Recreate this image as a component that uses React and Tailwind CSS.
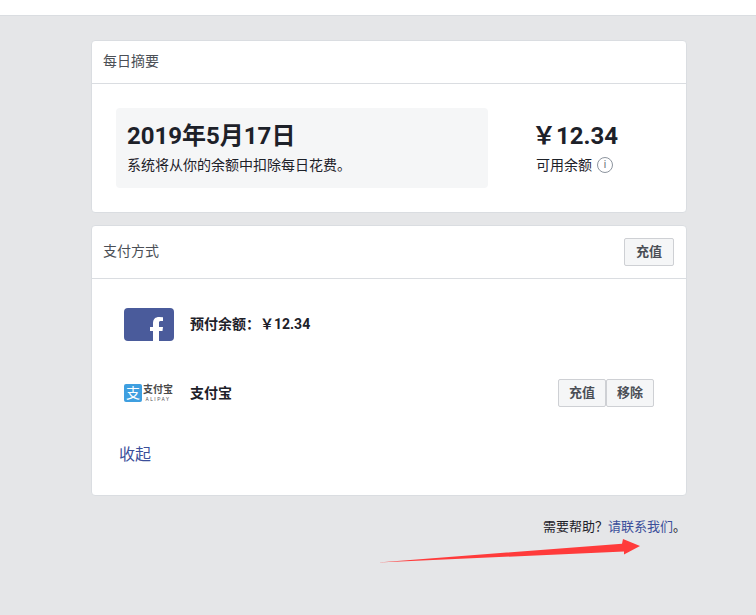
const Btn = ({ children, className = 'w-[50px]' }) => (
  <button className={`h-[28px] bg-[#f5f6f7] border border-[#ced0d4] rounded-[2px] text-[13px] font-bold text-[#4b4f56] ${className}`}>
    {children}
  </button>
)

const FacebookLogo = () => (
  <div className="w-[50px] h-[33px] rounded-[4px] bg-[#4a5b9b] overflow-hidden">
    <svg width="50" height="33" viewBox="0 0 50 33">
      <path d="M29 33V23H26V19H29V15.500C29 11 31.500 9 35 9L39 9.300V13H36.500C35 13 35 14 35 15.500V19H39L38.500 23H35V33Z" fill="#fff" />
    </svg>
  </div>
)

const AlipayLogo = () => (
  <div className="flex items-center gap-[1px] w-[50px]">
    <div className="w-[18px] h-[18px] rounded-[2px] bg-[#3f9fe0] flex items-center justify-center text-white text-[14px] leading-none">支</div>
    <div className="flex flex-col items-center">
      <span className="text-[10px] leading-[12px] font-bold text-[#4a4a4a] whitespace-nowrap">支付宝</span>
      <span className="text-[5px] leading-[6px] tracking-[1.500px] text-[#555]">ALIPAY</span>
    </div>
  </div>
)

export default function App() {
  return (
    <div className="relative min-h-[615px] bg-[#e5e6e8] font-['Roboto','Noto_Sans_CJK_SC',sans-serif] text-[#1d2129] overflow-hidden">
      {/* top bar */}
      <div className="h-[16px] bg-white border-b border-[#dadde1]"></div>

      <div className="w-[596px] ml-[91px] pt-[24px]">
        {/* summary */}
        <div className="h-[173px] bg-white border border-[#dadde1] rounded-[4px]">
          <div className="h-[43px] px-[11px] pb-[2px] flex items-center border-b border-[#dadde1] text-[14px] text-[#4b4f56]">
            每日摘要
          </div>
          <div className="flex pl-[24px] pt-[24px]">
            <div className="w-[372px] h-[80px] bg-[#f5f6f7] rounded-[4px] pl-[11px] pt-[13px]">
              <div className="text-[24px] leading-[30px] font-bold">2019年5月17日</div>
              <div className="text-[14px] leading-[18px] mt-[5px]">系统将从你的余额中扣除每日花费。</div>
            </div>
            <div className="ml-[48px] pt-[13px]">
              <div className="text-[24px] leading-[30px] font-bold -ml-[4px]">￥12.34</div>
              <div className="flex items-center gap-[5px] text-[14px] leading-[20px] mt-[4px]">
                可用余额
                <span className="w-[16px] h-[16px] rounded-full border border-[#8d949e] flex items-center justify-center text-[10px] text-[#606770]">i</span>
              </div>
            </div>
          </div>
        </div>

        {/* payment methods */}
        <div className="h-[271px] mt-[12px] bg-white border border-[#dadde1] rounded-[4px]">
          <div className="h-[53px] pl-[11px] pr-[12px] flex items-center justify-between border-b border-[#dadde1]">
            <span className="text-[14px] text-[#4b4f56] -mt-[2px]">支付方式</span>
            <Btn>充值</Btn>
          </div>

          <div className="flex items-center pl-[32px] pt-[29px] h-[62px]">
            <FacebookLogo />
            <span className="ml-[16px] text-[14px] font-bold">预付余额：￥12.34</span>
          </div>

          <div className="flex items-center pl-[32px] pr-[32px] mt-[38px] h-[28px]">
            <AlipayLogo />
            <span className="ml-[16px] text-[14px] font-bold">支付宝</span>
            <div className="ml-auto flex">
              <Btn className="w-[48px]">充值</Btn>
              <Btn className="w-[48px]">移除</Btn>
            </div>
          </div>

          <div className="pl-[27px] mt-[36px] text-[16px] leading-[24px] text-[#3b4f9b]">收起</div>
        </div>

        <div className="mt-[22px] text-right text-[13px] leading-[18px] pr-[1px]">
          需要帮助？<span className="text-[#3b4f9b]">请联系我们</span>。
        </div>
      </div>

      {/* red annotation arrow */}
      <svg className="absolute left-0 top-0" width="756" height="615" viewBox="0 0 756 615">
        <polygon points="378,562.500 622,543.700 623,539 640,546 624,554.500 624,551.500" fill="#ff3b3b" />
      </svg>
    </div>
  )
}
